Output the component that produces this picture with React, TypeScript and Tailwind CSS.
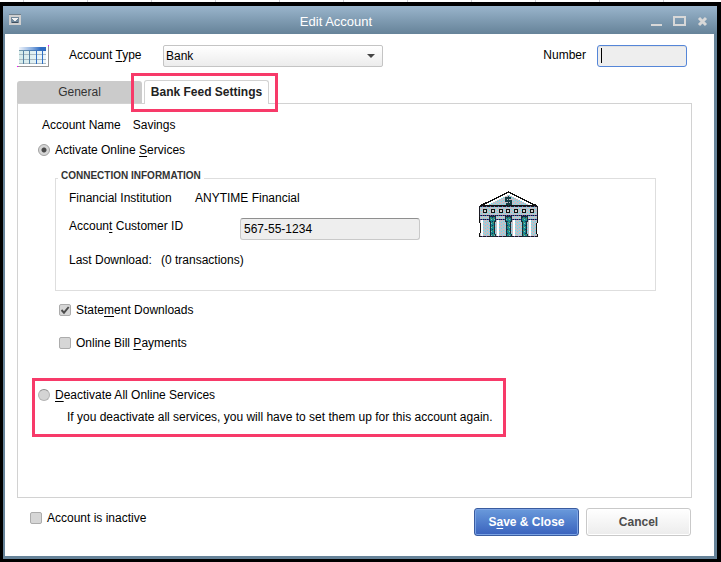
import { useState } from "react";
import type { InputHTMLAttributes, ReactNode } from "react";

function Key({ children }: { children: ReactNode }) {
  return <span className="underline underline-offset-2">{children}</span>;
}

function TableIcon() {
  return (
    <svg width="32" height="22" viewBox="0 0 32 22" shapeRendering="crispEdges" aria-hidden="true">
      <defs>
        <linearGradient id="head">
          <stop offset="0" stopColor="#eef3fa" />
          <stop offset="0.5" stopColor="#84aade" />
          <stop offset="0.8" stopColor="#2f6cc2" />
        </linearGradient>
        <linearGradient id="cells">
          <stop offset="0" stopColor="#d3eaea" />
          <stop offset="1" stopColor="#eef6fb" />
        </linearGradient>
        <linearGradient id="rule">
          <stop offset="0" stopColor="#7398a8" />
          <stop offset="1" stopColor="#2a66c0" />
        </linearGradient>
      </defs>
      <path d="M31 0h1v22h-1zM0 21h32v1H0z" fill="#979797" />
      <rect x="31" y="0" width="1" height="1" fill="#f0f" />
      <rect x="0" y="21" width="1" height="1" fill="#f0f" />
      <rect x="2" y="5" width="27" height="14" fill="url(#cells)" />
      <path d="M2 9h27v1H2zM2 14h27v1H2zM2 18h27v1H2z" fill="#a9b9c1" />
      <rect x="2" y="2" width="27" height="3" fill="url(#head)" />
      <rect x="2" y="5" width="27" height="1" fill="url(#rule)" />
      <path d="M6 6h1v13H6zM12 6h1v13h-1z" fill="#5583a3" />
      <path d="M19 6h1v13h-1zM25 6h1v13h-1z" fill="#2f6fc6" />
    </svg>
  );
}

function BankIcon() {
  return (
    <svg width="60" height="47" viewBox="0 0 60 47" shapeRendering="crispEdges" aria-hidden="true">
      <defs>
        <pattern id="stone" width="4" height="3" patternUnits="userSpaceOnUse">
          <rect width="4" height="3" fill="#c0c0c8" />
          <path d="M0 0h1v1H0zM2 1h1v1H2z" fill="#5fe0f0" />
        </pattern>
        <pattern id="shade" width="3" height="4" patternUnits="userSpaceOnUse">
          <rect width="3" height="4" fill="#168b8d" />
          <path d="M0 0h1v1H0z" fill="#8fb8b8" />
          <path d="M1 2h1v1H1z" fill="#1d2f62" />
          <path d="M2 3h1v1H2z" fill="#6c8a50" />
        </pattern>
        <pattern id="edge" width="4" height="2" patternUnits="userSpaceOnUse">
          <rect width="4" height="2" fill="#1a1a24" />
          <rect width="1" height="1" x="1" fill="#2633a6" />
          <rect width="1" height="2" x="3" fill="#5c5ca8" />
        </pattern>
      </defs>
      <path d="M29.500 1 1 15h57z" fill="#fff" stroke="#111" strokeWidth="1.4" />
      <path d="M29.500 4 9 14h41z" fill="url(#stone)" />
      <path d="M32 7h-5v3h5v3h-5M29.500 5v10" fill="none" stroke="#123b42" strokeWidth="1.4" />
      <path d="M0 15h59v12H0z" fill="url(#stone)" />
      <path d="M0 15h59v1H0zM0 24h59v1H0zM0 15h1v11H0zM58 15h1v11h-1z" fill="url(#edge)" />
      <g fill="#d0d0d0" stroke="#111">
        {[4, 12, 20, 27, 35, 43, 51].map((x) => (
          <rect key={x} x={x + 0.5} y="18.5" width="3" height="3" />
        ))}
      </g>
      <path d="M1 26h57v20H1z" fill="url(#stone)" />
      <path d="M2 29h2v16H2zM18 29h2v16h-2zM34 29h2v16h-2zM50 29h2v16h-2z" fill="#fff" />
      <path d="M0 28h59v1H0zM0 45h59v1H0z" fill="url(#edge)" />
      <g fill="url(#shade)" stroke="#1b2b38">
        <path d="M10.500 25.500h6v4l-1 2v8l1 6h-5v-14l-1-2z" />
        <path d="M26.500 25.500h6v4l-1 2v8l1 6h-5v-14l-1-2z" />
        <path d="M42.500 25.500h6v4l-1 2v8l1 6h-5v-14l-1-2z" />
      </g>
      <path d="M.5 26v5l1 2v6l-1 7M58.500 26v5l-1 2v6l1 7" fill="none" stroke="#111" />
    </svg>
  );
}

function TitleBar() {
  return (
    <header className="relative flex h-7 items-center justify-between bg-linear-to-b from-[#9ab5cc] to-[#668399] pr-[9px] pl-1.5">
      <button type="button" aria-label="Window menu">
        <svg width="12" height="12" viewBox="0 0 12 12" shapeRendering="crispEdges">
          <path d="M0 0h12v1H0z" fill="#70808c" />
          <path d="M0 1h12v10H0z" fill="#cfcfcf" />
          <path d="M2 3h8v6H2z" fill="#71889b" />
          <path d="M3 4h6v1H8v1H7v1H5V6H4V5H3z" fill="#f3f3f3" />
          <path d="M3 8h6v1H3z" fill="#3f4f5e" />
        </svg>
      </button>
      <h1 className="pointer-events-none absolute inset-x-0 mt-1 mr-12 text-center text-[13px] leading-4 text-white">
        Edit Account
      </h1>
      <div className="flex gap-[11px] pt-0.5 text-[#d8d8d8]">
        <button type="button" aria-label="Minimize">
          <svg width="11" height="12" viewBox="0 0 11 12" className="fill-current">
            <path d="M0 9h11v2H0z" />
          </svg>
        </button>
        <button type="button" aria-label="Maximize">
          <svg width="13" height="12" viewBox="0 0 13 12" fill="none" stroke="currentColor" strokeWidth="2">
            <path d="M1 2h11v8H1z" />
          </svg>
        </button>
        <button type="button" aria-label="Close">
          <svg width="11" height="12" viewBox="0 0 11 12" fill="none" stroke="currentColor" strokeWidth="3">
            <path d="m2 3 7 7M9 3l-7 7" />
          </svg>
        </button>
      </div>
    </header>
  );
}

type OptionProps = InputHTMLAttributes<HTMLInputElement> & { children: ReactNode };

function Checkbox({ children, ...props }: OptionProps) {
  return (
    <label className="flex w-fit items-center gap-[5px]">
      <span className="relative flex">
        <input
          type="checkbox"
          className="peer size-3 appearance-none rounded-xs border border-[#acacac] bg-[#d6d6d6]"
          {...props}
        />
        <svg
          width="12"
          height="12"
          viewBox="0 0 12 12"
          className="pointer-events-none absolute inset-0 hidden peer-checked:block"
        >
          <path d="m2.500 6 2.500 2.700L9.700 3" fill="none" stroke="#4c4c4c" strokeWidth="1.900" />
        </svg>
      </span>
      <span>{children}</span>
    </label>
  );
}

function Radio({ children, ...props }: OptionProps) {
  return (
    <label className="flex w-fit items-center gap-[5px]">
      <input
        type="radio"
        name="services"
        className="size-3 appearance-none rounded-full border border-[#b5b5b5] border-t-[#8c8c8c] bg-[#d4d4d4] checked:border-[#a3a3a3] checked:bg-[radial-gradient(circle,#4a4a4a_0,#4a4a4a_2px,#d6d6d6_3px)]"
        {...props}
      />
      <span>{children}</span>
    </label>
  );
}

export default function App() {
  const [type, setType] = useState("Bank");
  const [number, setNumber] = useState("");
  const [customerId, setCustomerId] = useState("567-55-1234");
  const [active, setActive] = useState(true);

  return (
    <div className="flex min-h-screen flex-col bg-black font-['Liberation_Sans',Arial,sans-serif] text-xs leading-4 text-black">
      <div className="h-0.5 bg-[repeating-linear-gradient(90deg,#fff_0,#fff_23px,#cfcfd4_23px,#cfcfd4_24px,#fff_24px,#fff_64px)]" />
      <div className="mt-1 mr-1 mb-[3px] ml-[3px] flex flex-1 flex-col rounded-t-xs bg-[#668399]">
        <TitleBar />
        <main className="mr-[3px] mb-[3px] ml-0.5 flex flex-1 flex-col bg-white pr-[22px] pl-3">
          <div className="flex items-center pt-[11px] pr-[5px]">
            <TableIcon />
            <label htmlFor="type" className="ml-5 w-[94px] pb-0.5">
              Account <Key>T</Key>ype
            </label>
            <div className="relative w-[220px]">
              <select
                id="type"
                value={type}
                onChange={(e) => setType(e.target.value)}
                className="block h-[22px] w-full appearance-none rounded-xs border border-[#c4c4c4] bg-linear-to-b from-white to-[#ececec] px-0.5"
              >
                <option>Bank</option>
                <option>Credit Card</option>
              </select>
              <svg
                width="8"
                height="4"
                viewBox="0 0 8 4"
                className="pointer-events-none absolute top-[9px] right-2"
              >
                <path d="M0 0h8L4 4z" fill="#444" />
              </svg>
            </div>
            <label htmlFor="number" className="mr-[11px] ml-auto pb-0.5">
              Number
            </label>
            <div className="relative w-[90px]">
              <input
                id="number"
                value={number}
                onChange={(e) => setNumber(e.target.value)}
                className="block h-[22px] w-full rounded-[3px] border border-[#5586d8] bg-[#eee] px-1 inset-shadow-2xs"
              />
              <span className="pointer-events-none absolute top-[3px] left-1 h-[15px] w-px bg-black" />
            </div>
          </div>

          <div role="tablist" className="relative z-10 mt-[13px] -mb-px flex h-6 gap-0.5">
            <button
              type="button"
              role="tab"
              aria-selected="false"
              className="mt-px mb-px w-[125px] rounded-t-[3px] bg-[#cbcbcb] text-[#333]"
            >
              General
            </button>
            <div className="relative flex">
              <button
                type="button"
                role="tab"
                aria-selected="true"
                className="w-[125px] rounded-t-[3px] border border-b-0 border-[#d2d2d2] bg-white pb-0.5 font-bold text-[#222]"
              >
                Bank Feed Settings
              </button>
              <span className="pointer-events-none absolute -inset-x-[13px] -top-[7px] -bottom-2 -mr-[-4px] border-3 border-[#f73a69]" />
            </div>
          </div>

          <section className="flex-1 border border-[#d2d2d2] pt-[13px] pr-[35px] pl-5">
            <div className="ml-1 flex gap-3">
              <span>Account Name</span>
              <span>Savings</span>
            </div>
            <div className="mt-[9px]">
              <Radio checked={active} onChange={() => setActive(true)}>
                Activate Online <Key>S</Key>ervices
              </Radio>
            </div>

            <fieldset className="mt-3 ml-[17px] flex border border-[#dedede] pt-1 pb-[22px] pl-[13px]">
              <legend className="-ml-[11px] px-[3px] pb-[5px] text-[10px] leading-[11px] font-bold text-[#333]">
                CONNECTION INFORMATION
              </legend>
              <div className="flex flex-col gap-3">
                <div className="flex">
                  <span className="w-[126px]">Financial Institution</span>
                  <span>ANYTIME Financial</span>
                </div>
                <div className="flex">
                  <label htmlFor="customer" className="w-[171px]">
                    Accoun<Key>t</Key> Customer ID
                  </label>
                  <input
                    id="customer"
                    value={customerId}
                    onChange={(e) => setCustomerId(e.target.value)}
                    className="h-[22px] w-[180px] rounded-[3px] border border-[#c9c9c9] border-t-[#8f8f8f] bg-[#eee] px-[3px]"
                  />
                </div>
                <div className="flex">
                  <span className="w-[92px]">Last Download:</span>
                  <span>(0 transactions)</span>
                </div>
              </div>
              <div className="ml-[59px] pt-px">
                <BankIcon />
              </div>
            </fieldset>

            <div className="mt-[11px] ml-[21px] flex flex-col gap-[17px]">
              <Checkbox defaultChecked>
                State<Key>m</Key>ent Downloads
              </Checkbox>
              <Checkbox>
                Online Bill <Key>P</Key>ayments
              </Checkbox>
            </div>

            <div className="relative mt-9 w-fit">
              <Radio checked={!active} onChange={() => setActive(false)}>
                <Key>D</Key>eactivate All Online Services
              </Radio>
              <p className="mt-1.5 ml-[29px]">
                If you deactivate all services, you will have to set them up for this account again.
              </p>
              <span className="pointer-events-none absolute -top-[9px] -right-[13px] -bottom-3 -left-1.5 border-3 border-[#f73a69]" />
            </div>
          </section>

          <footer className="flex items-center justify-between pt-2.5 pr-px pb-5 pl-[13px]">
            <div className="pb-2">
              <Checkbox>Account is inactive</Checkbox>
            </div>
            <div className="flex gap-[7px]">
              <button
                type="button"
                className="h-7 w-[105px] rounded-[3px] border border-[#3a5c9f] bg-linear-to-b from-[#6a9adb] to-[#3a62bd] font-bold text-white inset-ring inset-ring-[#7ba3e4]"
              >
                S<Key>a</Key>ve &amp; Close
              </button>
              <button
                type="button"
                className="h-7 w-[105px] rounded-[3px] border border-[#c9c9c9] bg-linear-to-b from-white to-[#ececec] font-bold text-[#4d4d4d] inset-ring inset-ring-white"
              >
                Cancel
              </button>
            </div>
          </footer>
        </main>
      </div>
    </div>
  );
}
